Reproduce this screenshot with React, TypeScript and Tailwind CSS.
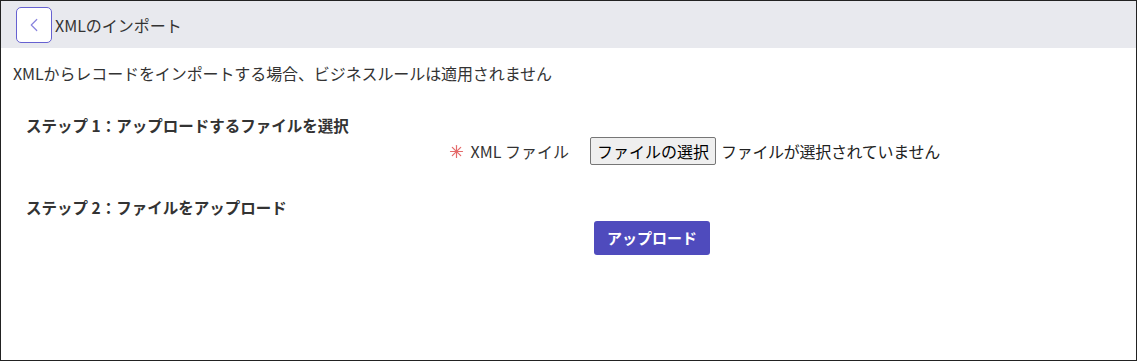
import { ChevronLeft } from "lucide-react";

const font = { fontFamily: '"Noto Sans CJK JP", "Noto Sans", sans-serif' };

function Star() {
    return (
        <svg width="15" height="15" viewBox="0 0 15 15" className="text-[#e46a6a]" stroke="currentColor" strokeWidth="1.2" strokeLinecap="round">
            <line x1="1.5" y1="7.5" x2="13.5" y2="7.5" />
            <line x1="7.5" y1="1.5" x2="7.5" y2="13.5" />
            <line x1="3.3" y1="3.3" x2="11.7" y2="11.7" />
            <line x1="11.7" y1="3.3" x2="3.3" y2="11.7" />
        </svg>
    );
}

export default function App() {
    return (
        <div className="w-[1137px] h-[361px] bg-white border border-[#222] flex flex-col text-[#333]" style={font}>
            <div className="h-[47px] bg-[#e8e9ee] flex items-center pl-[15px] gap-[3px] shrink-0">
                <button className="w-[36px] h-[36px] bg-white border border-[#6661d1] rounded-[5px] flex items-center justify-center">
                    <ChevronLeft className="w-[22px] h-[22px] text-[#8883de]" strokeWidth={1.3} />
                </button>
                <span className="text-[16px] leading-none">XMLのインポート</span>
            </div>

            <div className="pl-[12px] pt-[15px] text-[16px] leading-[20px] tracking-[-0.1px]">
                XMLからレコードをインポートする場合、ビジネスルールは適用されません
            </div>

            <div className="pl-[25px] pt-[32px] text-[15.5px] leading-[20px] font-bold">
                ステップ 1：アップロードするファイルを選択
            </div>

            <div className="flex items-center pt-[2px]">
                <div className="w-[568px] flex justify-end items-center gap-[7px] text-[16px]">
                    <Star />
                    <span>XML ファイル</span>
                </div>
                <div className="ml-[21px] flex items-center gap-[5px] text-[16px] text-black">
                    <span className="h-[28px] px-[6px] bg-[#efefef] border border-[#767676] rounded-[2px] flex items-center">ファイルの選択</span>
                    <span className="text-[#222] tracking-[-0.3px]">ファイルが選択されていません</span>
                </div>
            </div>

            <div className="pl-[25px] pt-[32px] text-[15.5px] leading-[20px] font-bold">
                ステップ 2：ファイルをアップロード
            </div>

            <div className="flex pt-[4px]">
                <button className="ml-[593px] w-[116px] h-[34px] bg-[#4f4bbd] rounded-[3px] text-white font-bold text-[15px]">
                    アップロード
                </button>
            </div>
        </div>
    );
}
